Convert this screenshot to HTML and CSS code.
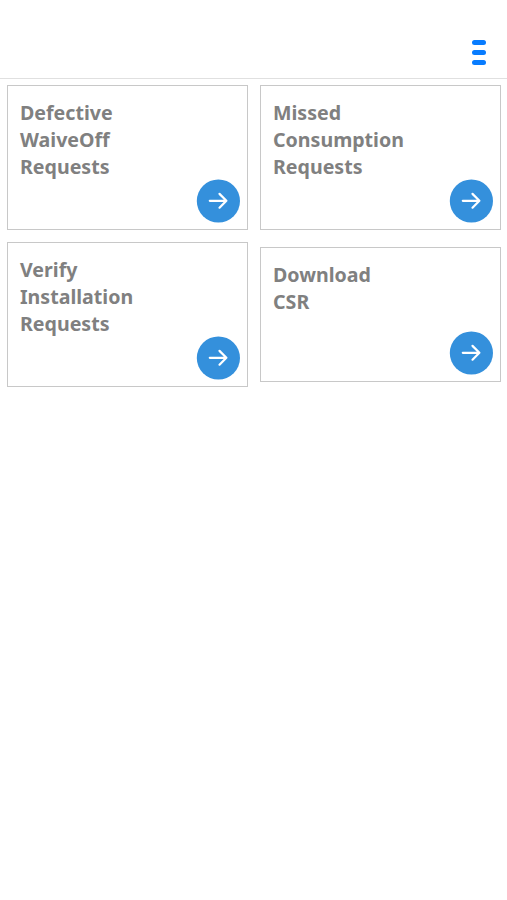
FILE: index.html
```html
<!DOCTYPE html>
<html lang="en">
<head>
<meta charset="utf-8">
<title>Requests</title>
<link rel="stylesheet" href="styles.css">
</head>
<body>
<header class="bar">
<button class="menu" aria-label="Menu"><span></span><span></span><span></span></button>
</header>
<main class="grid">
<a class="card"><h2>Defective<br>WaiveOff<br>Requests</h2><svg class="go" viewBox="0 0 44 44"><circle cx="22.4" cy="22" r="21.6"/><path d="M13.8 21.8h16.6M23.5 14.9l6.9 6.9-6.9 6.9"/></svg></a>
<a class="card"><h2>Missed<br>Consumption<br>Requests</h2><svg class="go" viewBox="0 0 44 44"><circle cx="22.4" cy="22" r="21.6"/><path d="M13.8 21.8h16.6M23.5 14.9l6.9 6.9-6.9 6.9"/></svg></a>
<a class="card"><h2>Verify<br>Installation<br>Requests</h2><svg class="go" viewBox="0 0 44 44"><circle cx="22.4" cy="22" r="21.6"/><path d="M13.8 21.8h16.6M23.5 14.9l6.9 6.9-6.9 6.9"/></svg></a>
<a class="card short"><h2>Download<br>CSR</h2><svg class="go" viewBox="0 0 44 44"><circle cx="22.4" cy="22" r="21.6"/><path d="M13.8 21.8h16.6M23.5 14.9l6.9 6.9-6.9 6.9"/></svg></a>
</main>
</body>
</html>
```
FILE: styles.css
```css
* { box-sizing: border-box; }
body { margin: 0; background: #fff; font-family: "Noto Sans", sans-serif; }
.bar { height: 79px; border-bottom: 1px solid #e0e0e0; display: flex; justify-content: flex-end; align-items: flex-start; padding: 40px 21px 0 0; }
.menu { border: 0; padding: 0; background: none; display: flex; flex-direction: column; gap: 5px; }
.menu span { width: 14px; height: 5px; border-radius: 2.5px; background: #087cff; }
.grid { display: grid; grid-template-columns: 241px 241px; gap: 12px; padding: 6px 6px 0 7px; align-items: center; }
.card { height: 145px; border: 1px solid #c8c8c8; padding: 13px 7px 6px 12px; display: flex; flex-direction: column; justify-content: space-between; }
.short { height: 135px; }
.card h2 { margin: 0; font-size: 19.6px; line-height: 27px; height: 80px; font-weight: 700; color: #808080; flex: none; }
.short h2 { height: 54px; }
.go { width: 44px; height: 44px; flex: none; align-self: flex-end; }
.go circle { fill: #3490dc; }
.go path { fill: none; stroke: #fff; stroke-width: 2.2; stroke-linecap: round; stroke-linejoin: round; }
```
